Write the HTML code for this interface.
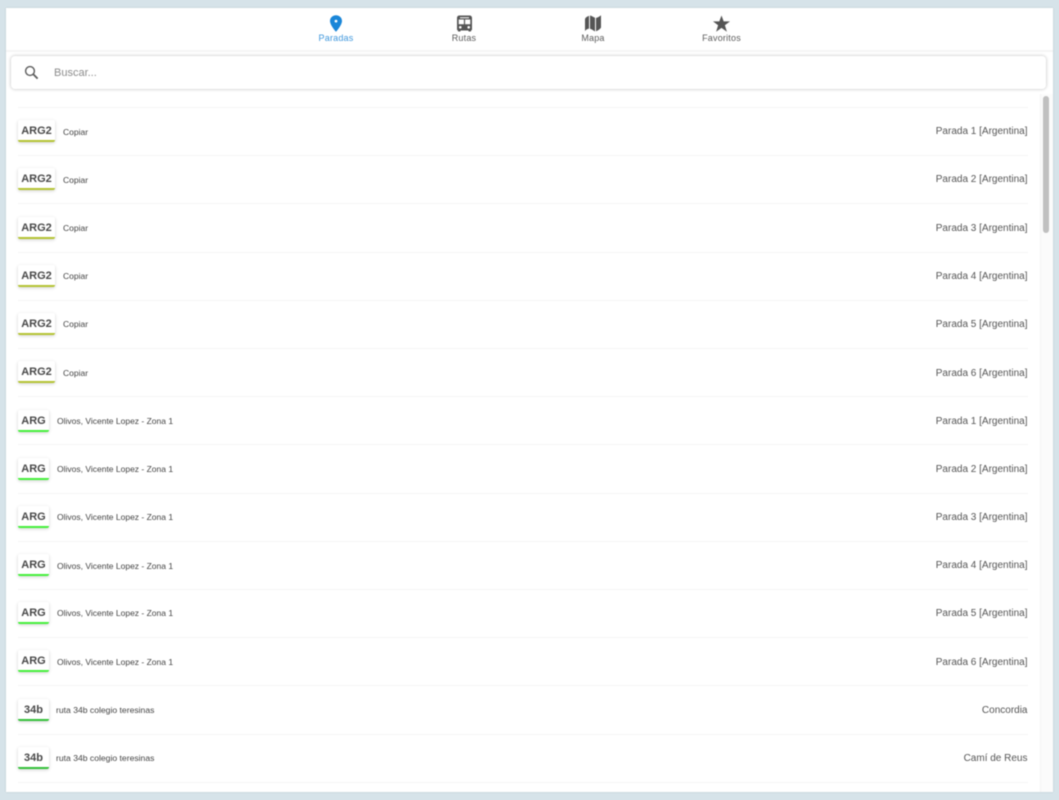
<!DOCTYPE html>
<html><head><meta charset="utf-8"><style>
html,body{margin:0;padding:0;width:1059px;height:800px;overflow:hidden;background:#d6e3e9;font-family:"Liberation Sans",sans-serif;color:#555}
#w{position:absolute;left:0;top:0;width:1059px;height:800px;filter:blur(.45px)}
#card{position:absolute;left:6px;top:8px;width:1047px;height:784px;background:#fff;box-shadow:0 0 2px rgba(0,0,0,.12)}
.a{position:absolute}
.nav{position:absolute;top:33px;width:100px;text-align:center;font-size:9px;line-height:10px;letter-spacing:.2px;color:#5c5c5c}
#search{position:absolute;left:11px;top:56px;width:1035px;height:33px;background:#fff;border-radius:4px;box-shadow:0 0 3px rgba(0,0,0,.28)}
#hl{position:absolute;left:6px;top:50px;width:1047px;height:2px;background:#f5f5f5}
.sep{position:absolute;left:18px;width:1010px;height:1px;background:#f5f5f5}
.b{position:absolute;left:18px;height:22px;background:#fff;border-radius:2px;box-shadow:0 1px 3px rgba(0,0,0,.18);text-align:center;font-size:11px;font-weight:bold;line-height:23px;color:#484848;box-sizing:border-box;border-bottom:2px solid}
.t{position:absolute;font-size:8.5px;line-height:10px;color:#444;white-space:nowrap}
.u{font-size:8.6px}
.r{position:absolute;right:31.5px;font-size:10px;line-height:12px;color:#555;white-space:nowrap;margin-top:1px}
#track{position:absolute;left:1040px;top:94px;width:13px;height:698px;background:#fbfbfb;border-left:1px solid #f3f3f3;box-sizing:border-box}
#thumb{position:absolute;left:1043px;top:96px;width:6px;height:137px;background:#c0c0c0;border-radius:3px}
</style></head><body><div id="w">
<div id="card"></div>
<svg class="a" style="left:328px;top:15px" width="16" height="17" viewBox="0 0 16 17"><path fill-rule="evenodd" fill="#1a86d8" d="M8 0.200C4.500 0.200 2 2.800 2 6C2 10.200 8 16.800 8 16.800C8 16.800 14 10.200 14 6C14 2.800 11.500 0.200 8 0.200ZM8 4.700A1.400 1.400 0 1 1 8 7.500A1.400 1.400 0 1 1 8 4.700Z"/></svg>
<div class="nav" style="left:286px;color:#3f97dc">Paradas</div>
<svg class="a" style="left:456px;top:15px" width="17" height="17" viewBox="0 0 17 17"><path fill-rule="evenodd" fill="#555" d="M3.500 0.500H13.500C15 0.500 16 1.500 16 3V14.500C16 15 15.700 15.300 15 15.400V16.500H12.500V15.500H4.500V16.500H2V15.400C1.300 15.300 1 15 1 14.500V3C1 1.500 2 0.500 3.500 0.500ZM4 2.200V3.200H13V2.200ZM2.700 4.500V9.300H7.900V4.500ZM9.100 4.500V9.300H14.300V4.500ZM4.300 11A1.300 1.300 0 1 0 4.300 13.600A1.300 1.300 0 1 0 4.300 11ZM12.700 11A1.300 1.300 0 1 0 12.700 13.600A1.300 1.300 0 1 0 12.700 11Z"/></svg>
<div class="nav" style="left:414px">Rutas</div>
<svg class="a" style="left:584px;top:15px" width="18" height="17" viewBox="0 0 18 17"><path fill="#555" d="M1 4.500C1 3.500 2 2 5 0.800V13.500C2.500 14.300 1 15.500 1 16.500ZM6 0.500C8 0.800 9 2 11 2.800V16.500C9 15.500 8 14.300 6 13.800ZM12 3C14 2.500 15.500 1.500 17 0.300V12.500C16.500 13.800 14 15.500 12 16.300Z"/></svg>
<div class="nav" style="left:543px">Mapa</div>
<svg class="a" style="left:712px;top:15px" width="19" height="18" viewBox="0 0 19 18"><path fill="#555" d="M9.500 0.500L11.700 6.400H18L12.900 10.300L14.900 16.800L9.500 12.900L4.100 16.800L6.100 10.300L1 6.400H7.300Z"/></svg>
<div class="nav" style="left:671.500px">Favoritos</div>
<div id="hl"></div>
<div id="search"></div>
<svg class="a" style="left:24px;top:65px" width="15" height="15" viewBox="0 0 15 15"><circle cx="6" cy="6" r="4.400" fill="none" stroke="#5c5c5c" stroke-width="1.400"/><path d="M9.300 9.300L13.600 13.600" stroke="#5c5c5c" stroke-width="1.800"/></svg>
<div class="a" style="left:54px;top:67px;font-size:11px;line-height:13px;color:#8c8c8c">Buscar...</div>
<div id="track"></div><div id="thumb"></div>

<div class="sep" style="top:107px"></div>
<div class="b" style="top:120px;width:37px;border-color:#b4c433">ARG2</div><div class="t" style="left:63px;top:126.500px">Copiar</div><div class="r" style="top:125px">Parada 1 [Argentina]</div>
<div class="sep" style="top:155px"></div>
<div class="b" style="top:168px;width:37px;border-color:#b4c433">ARG2</div><div class="t" style="left:63px;top:174.500px">Copiar</div><div class="r" style="top:173px">Parada 2 [Argentina]</div>
<div class="sep" style="top:203px"></div>
<div class="b" style="top:216.500px;width:37px;border-color:#b4c433">ARG2</div><div class="t" style="left:63px;top:223px">Copiar</div><div class="r" style="top:222px">Parada 3 [Argentina]</div>
<div class="sep" style="top:252px"></div>
<div class="b" style="top:265px;width:37px;border-color:#b4c433">ARG2</div><div class="t" style="left:63px;top:271px">Copiar</div><div class="r" style="top:270px">Parada 4 [Argentina]</div>
<div class="sep" style="top:300px"></div>
<div class="b" style="top:313px;width:37px;border-color:#b4c433">ARG2</div><div class="t" style="left:63px;top:319px">Copiar</div><div class="r" style="top:318px">Parada 5 [Argentina]</div>
<div class="sep" style="top:348px"></div>
<div class="b" style="top:361px;width:37px;border-color:#b4c433">ARG2</div><div class="t" style="left:63px;top:367.500px">Copiar</div><div class="r" style="top:367px">Parada 6 [Argentina]</div>
<div class="sep" style="top:396px"></div>
<div class="b" style="top:409.500px;width:31px;border-color:#46f03c">ARG</div><div class="t" style="left:57px;top:415.500px">Olivos, Vicente Lopez - Zona 1</div><div class="r" style="top:415px">Parada 1 [Argentina]</div>
<div class="sep" style="top:444px"></div>
<div class="b" style="top:457.500px;width:31px;border-color:#46f03c">ARG</div><div class="t" style="left:57px;top:463.500px">Olivos, Vicente Lopez - Zona 1</div><div class="r" style="top:463px">Parada 2 [Argentina]</div>
<div class="sep" style="top:493px"></div>
<div class="b" style="top:506px;width:31px;border-color:#46f03c">ARG</div><div class="t" style="left:57px;top:512px">Olivos, Vicente Lopez - Zona 1</div><div class="r" style="top:511px">Parada 3 [Argentina]</div>
<div class="sep" style="top:541px"></div>
<div class="b" style="top:554px;width:31px;border-color:#46f03c">ARG</div><div class="t" style="left:57px;top:560.500px">Olivos, Vicente Lopez - Zona 1</div><div class="r" style="top:559px">Parada 4 [Argentina]</div>
<div class="sep" style="top:589px"></div>
<div class="b" style="top:602px;width:31px;border-color:#46f03c">ARG</div><div class="t" style="left:57px;top:608px">Olivos, Vicente Lopez - Zona 1</div><div class="r" style="top:607px">Parada 5 [Argentina]</div>
<div class="sep" style="top:637px"></div>
<div class="b" style="top:650px;width:31px;border-color:#46f03c">ARG</div><div class="t" style="left:57px;top:656.500px">Olivos, Vicente Lopez - Zona 1</div><div class="r" style="top:656px">Parada 6 [Argentina]</div>
<div class="sep" style="top:685px"></div>
<div class="b" style="top:698.500px;width:31px;border-color:#35c23a">34b</div><div class="t u" style="left:56px;top:705px">ruta 34b colegio teresinas</div><div class="r" style="top:704px">Concordia</div>
<div class="sep" style="top:734px"></div>
<div class="b" style="top:746.500px;width:31px;border-color:#35c23a">34b</div><div class="t u" style="left:56px;top:753px">ruta 34b colegio teresinas</div><div class="r" style="top:752px">Camí de Reus</div>
<div class="sep" style="top:782px"></div>
</div></body></html>
